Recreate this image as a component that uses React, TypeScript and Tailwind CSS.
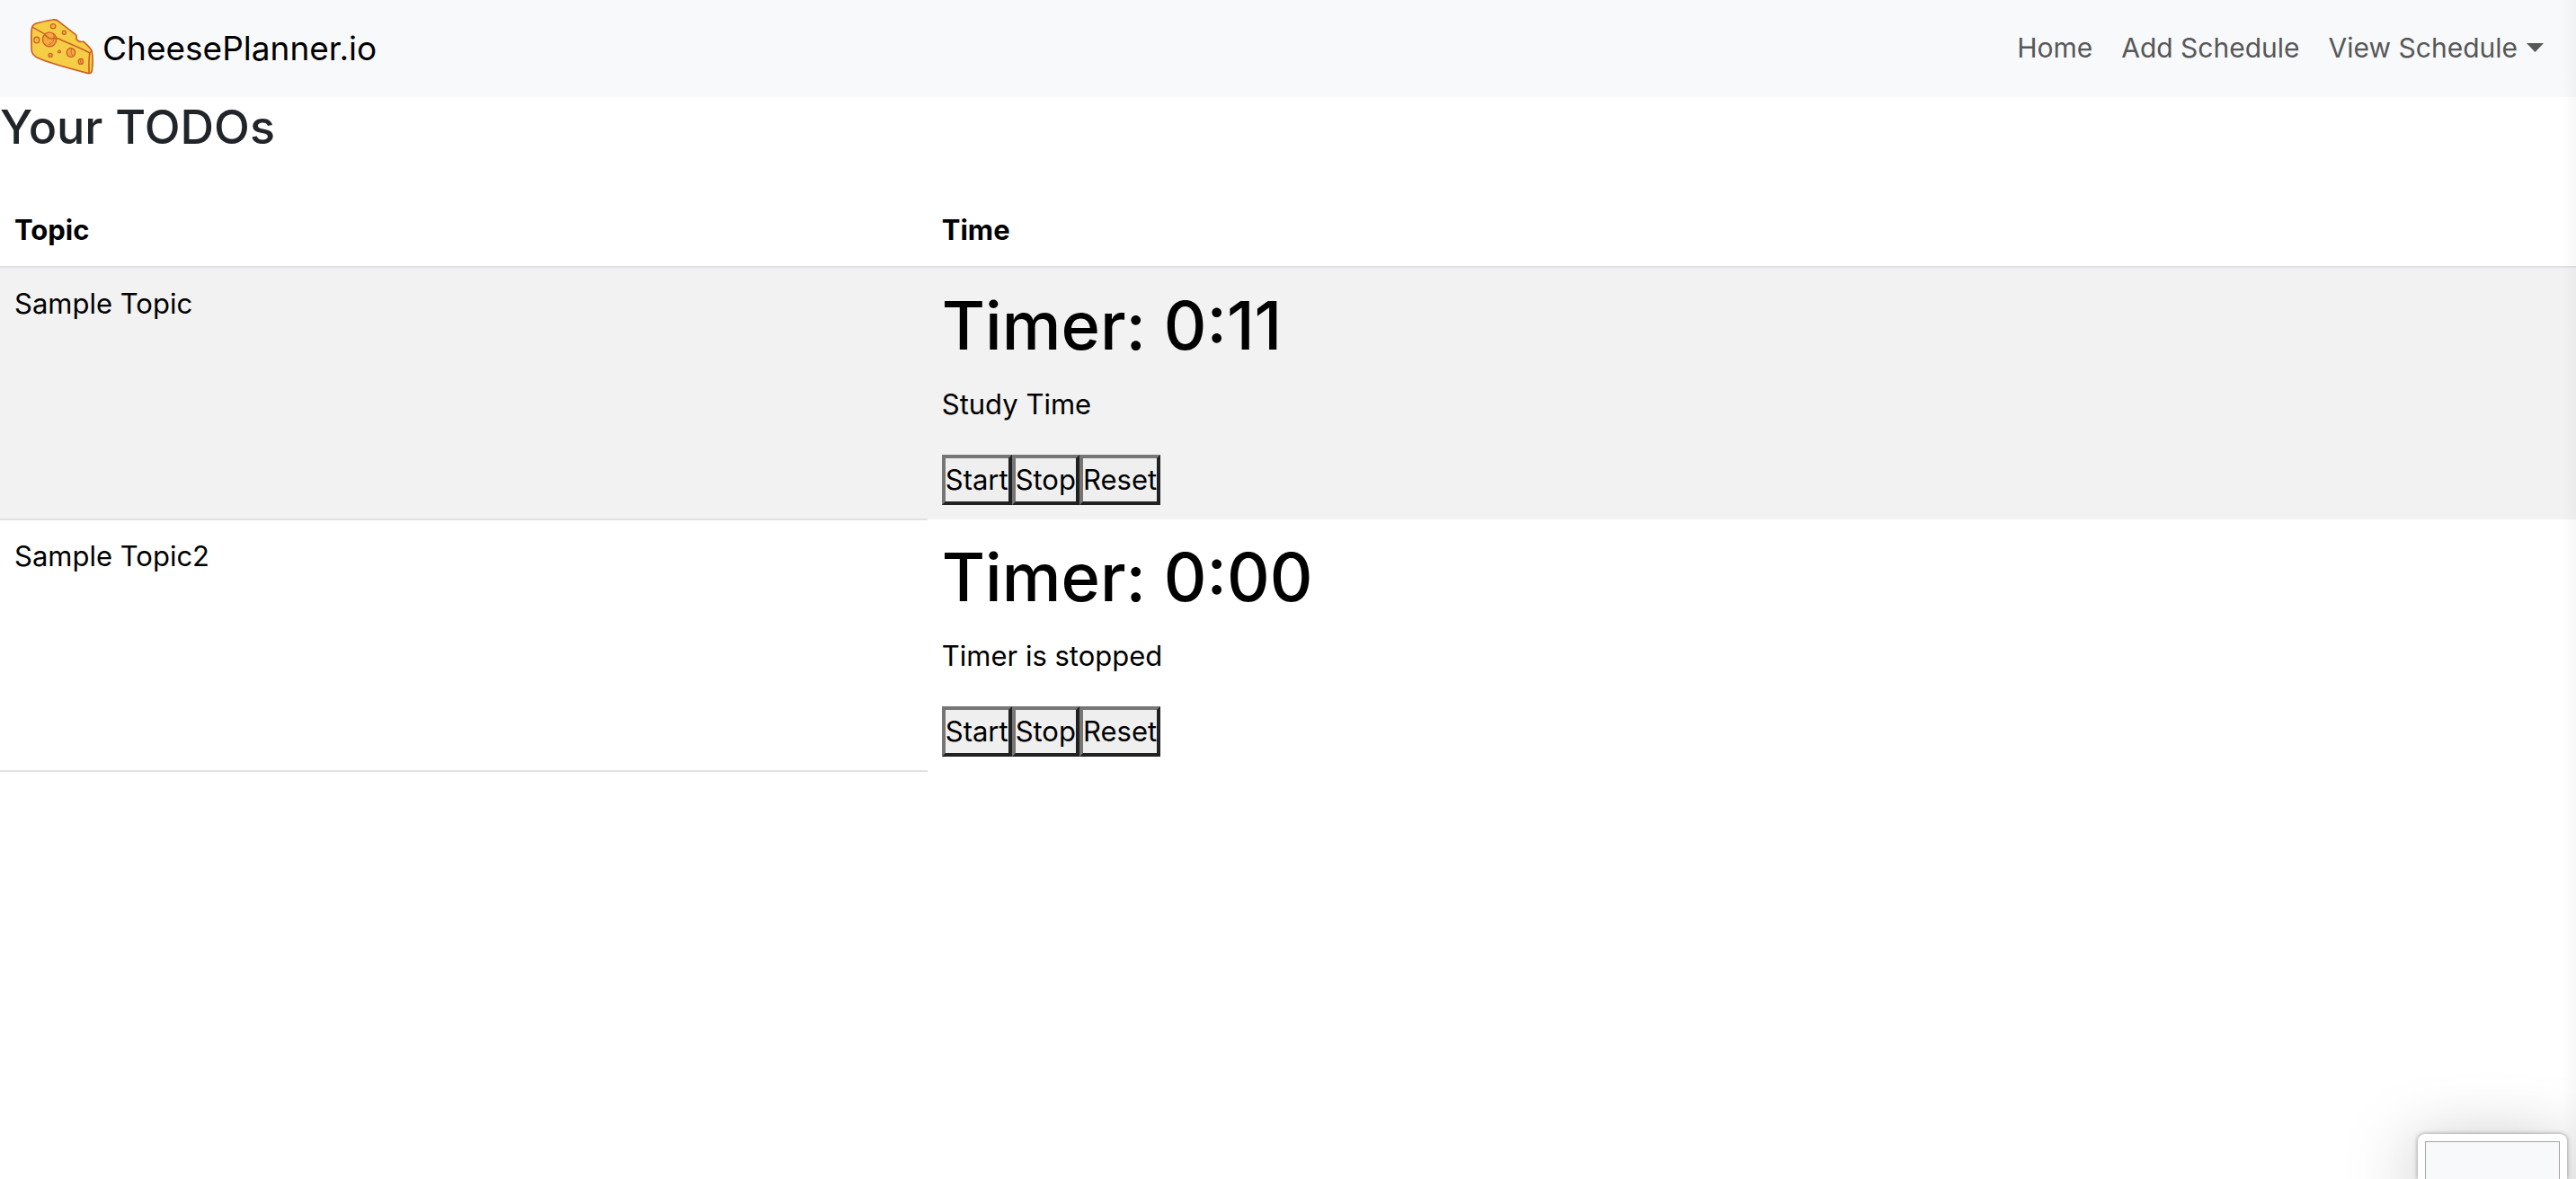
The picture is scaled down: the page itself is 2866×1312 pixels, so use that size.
import React from "react";

const todos = [
  { topic: "Sample Topic", time: "0:11", status: "Study Time" },
  { topic: "Sample Topic2", time: "0:00", status: "Timer is stopped" },
];

function Cheese() {
  return (
    <svg viewBox="42 32 210 187" className="mb-1 h-[62px] w-[70px]" aria-hidden="true">
      <g stroke="#cb5f26" strokeLinejoin="round" strokeLinecap="round">
        <path
          d="M45 67C46 56 50 52 58 48C76 42 98 38 116 35C124 33 130 36 135 40L193 85C199 89 194 94 195 99C200 107 210 110 219 108C231 119 244 130 247 140C250 154 250 185 248 203C248 212 242 217 232 214C172 199 104 180 63 162C54 156 46 148 45 139C44 116 43 88 45 67Z"
          fill="#f5ce45"
          strokeWidth="5"
        />
        <g fill="#f3a93e">
          <ellipse cx="105" cy="101" rx="23" ry="24" strokeWidth="4" />
          <ellipse cx="62" cy="103" rx="9" ry="10" fill="#f5b943" strokeWidth="4" />
          <circle cx="117" cy="57" r="8" fill="#f5b943" strokeWidth="4" />
          <circle cx="154" cy="78" r="6" fill="#f5b943" strokeWidth="4" />
          <ellipse cx="177" cy="145" rx="14" ry="15" strokeWidth="4" />
          <ellipse cx="210" cy="175" rx="8" ry="9" strokeWidth="4" />
          <circle cx="108" cy="154" r="6" strokeWidth="4" />
          <circle cx="138" cy="142" r="4" strokeWidth="4" />
        </g>
        <g fill="none">
          <path d="M48 60L84 80C92 84 95 96 107 98C116 99 123 98 131 97C166 113 205 128 240 146L247 140" strokeWidth="4.5" />
          <path d="M240 146C237 168 237 191 238 212" strokeWidth="5" />
          <path d="M118 83C124 98 120 112 103 118M180 132C175 140 177 151 184 157M211 167C207 171 208 177 212 181" strokeWidth="3" />
        </g>
      </g>
    </svg>
  );
}

function TimerButton({ children }: { children: React.ReactNode }) {
  return (
    <button
      type="button"
      className="h-14 border-4 border-t-[#767676] border-r-[#212121] border-b-[#212121] border-l-[#767676] bg-[#efefef] leading-[48px]"
    >
      {children}
    </button>
  );
}

export default function App() {
  return (
    <div className="relative min-h-screen overflow-hidden bg-white font-['Inter',sans-serif] text-[31px] leading-[48px] text-black">
      <nav className="flex h-[108px] items-center justify-between bg-[#f8f9fb] pr-9 pl-[34px]">
        <a href="#" className="flex items-center gap-2.5 text-[37px] leading-[60px]">
          <Cheese />
          <span>CheesePlanner.io</span>
        </a>
        <div className="flex items-center gap-8 pb-0.5 text-[30px] text-[#575757]">
          <a href="#">Home</a>
          <a href="#">Add Schedule</a>
          <button type="button" className="flex items-center gap-2.5">
            View Schedule
            <svg viewBox="0 0 19 10" className="h-[10px] w-[19px]" fill="currentColor" aria-hidden="true">
              <path d="M0 0H19L9.500 10Z" />
            </svg>
          </button>
        </div>
      </nav>

      <h2 className="mb-10 text-[52px] leading-[68px] font-medium text-[#212529]">Your TODOs</h2>

      <table className="w-full table-fixed border-collapse text-left">
        <thead>
          <tr className="border-b-2 border-[#dee2e6]">
            <th className="w-[36%] p-4 font-bold">Topic</th>
            <th className="p-4 font-bold">Time</th>
          </tr>
        </thead>
        <tbody>
          {todos.map((todo) => (
            <tr key={todo.topic} className="align-top odd:bg-[#f2f2f2]">
              <td className="border-b-2 border-[#dee2e6] p-4">{todo.topic}</td>
              <td className="p-4">
                <h1 className="mb-4 text-[74px] leading-[96px] font-medium">Timer: {todo.time}</h1>
                <p className="mb-8">{todo.status}</p>
                <div className="flex">
                  <TimerButton>Start</TimerButton>
                  <TimerButton>Stop</TimerButton>
                  <TimerButton>Reset</TimerButton>
                </div>
              </td>
            </tr>
          ))}
        </tbody>
      </table>

      <div className="absolute inset-y-0 right-0 w-4 bg-linear-to-r from-transparent to-black/3" />
      <div className="absolute right-[10px] bottom-0 h-[50px] w-[166px] rounded-t-lg bg-white px-2 pt-2 shadow-[0_0_5px_rgba(0,0,0,0.4),0_20px_80px_rgba(0,0,0,0.36)]">
        <div className="h-full border border-b-0 border-[#a3a3a3] bg-[#f8f9fb]" />
      </div>
    </div>
  );
}
